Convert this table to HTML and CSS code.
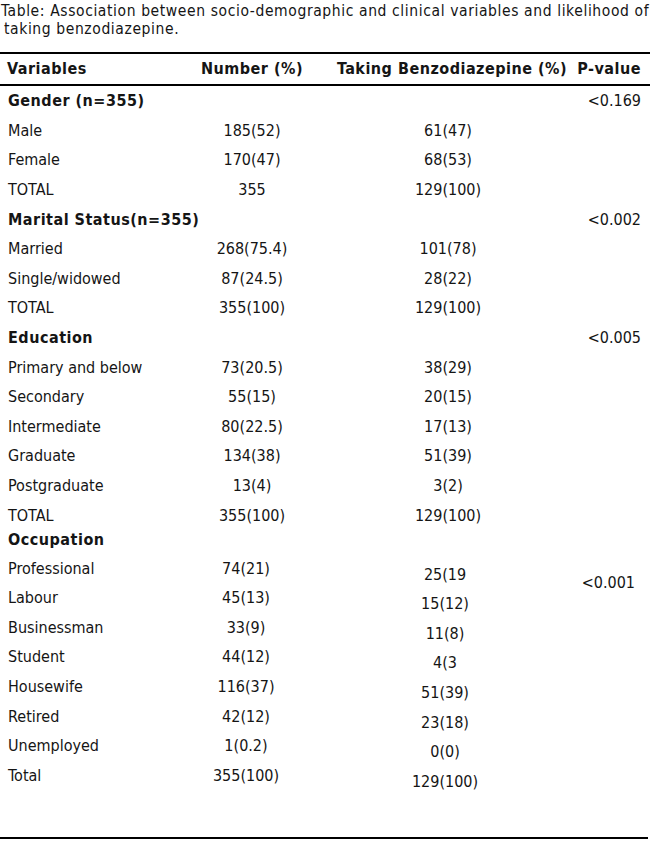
FILE: index.html
```html
<!DOCTYPE html>
<html lang="en">
<head>
<meta charset="utf-8">
<title>Association table</title>
<link rel="stylesheet" href="styles.css">
</head>
<body>
<div class="caption">
  <span class="line">Table: Association between socio-demographic and clinical variables and likelihood of</span>
  <span class="line indent">taking benzodiazepine.</span>
</div>
<table class="data">
  <colgroup>
    <col class="c-var"><col class="c-num"><col class="c-take"><col class="c-p">
  </colgroup>
  <thead>
    <tr>
      <th class="var">Variables</th>
      <th class="num">Number (%)</th>
      <th class="take">Taking Benzodiazepine (%)</th>
      <th class="p">P-value</th>
    </tr>
  </thead>
  <tbody>
    <tr class="group"><td class="var">Gender (n=355)</td><td></td><td></td><td class="p">&lt;0.169</td></tr>
    <tr><td class="var">Male</td><td class="num">185(52)</td><td class="take">61(47)</td><td></td></tr>
    <tr><td class="var">Female</td><td class="num">170(47)</td><td class="take">68(53)</td><td></td></tr>
    <tr><td class="var">TOTAL</td><td class="num">355</td><td class="take">129(100)</td><td></td></tr>

    <tr class="group"><td class="var">Marital Status(n=355)</td><td></td><td></td><td class="p">&lt;0.002</td></tr>
    <tr><td class="var">Married</td><td class="num">268(75.4)</td><td class="take">101(78)</td><td></td></tr>
    <tr><td class="var">Single/widowed</td><td class="num">87(24.5)</td><td class="take">28(22)</td><td></td></tr>
    <tr><td class="var">TOTAL</td><td class="num">355(100)</td><td class="take">129(100)</td><td></td></tr>

    <tr class="group"><td class="var">Education</td><td></td><td></td><td class="p">&lt;0.005</td></tr>
    <tr><td class="var">Primary and below</td><td class="num">73(20.5)</td><td class="take">38(29)</td><td></td></tr>
    <tr><td class="var">Secondary</td><td class="num">55(15)</td><td class="take">20(15)</td><td></td></tr>
    <tr><td class="var">Intermediate</td><td class="num">80(22.5)</td><td class="take">17(13)</td><td></td></tr>
    <tr><td class="var">Graduate</td><td class="num">134(38)</td><td class="take">51(39)</td><td></td></tr>
    <tr><td class="var">Postgraduate</td><td class="num">13(4)</td><td class="take">3(2)</td><td></td></tr>
    <tr><td class="var">TOTAL</td><td class="num">355(100)</td><td class="take">129(100)</td><td></td></tr>

    <tr class="group short"><td class="var">Occupation</td><td></td><td></td><td></td></tr>
    <tr class="occ"><td class="var">Professional</td><td class="num">74(21)</td><td class="take">25(19</td><td class="p pspan" rowspan="2">&lt;0.001</td></tr>
    <tr class="occ"><td class="var">Labour</td><td class="num">45(13)</td><td class="take">15(12)</td></tr>
    <tr class="occ"><td class="var">Businessman</td><td class="num">33(9)</td><td class="take">11(8)</td><td></td></tr>
    <tr class="occ"><td class="var">Student</td><td class="num">44(12)</td><td class="take">4(3</td><td></td></tr>
    <tr class="occ"><td class="var">Housewife</td><td class="num">116(37)</td><td class="take">51(39)</td><td></td></tr>
    <tr class="occ"><td class="var">Retired</td><td class="num">42(12)</td><td class="take">23(18)</td><td></td></tr>
    <tr class="occ"><td class="var">Unemployed</td><td class="num">1(0.2)</td><td class="take">0(0)</td><td></td></tr>
    <tr class="occ"><td class="var">Total</td><td class="num">355(100)</td><td class="take">129(100)</td><td></td></tr>
  </tbody>
</table>
<div class="endrule"></div>
</body>
</html>
```

FILE: styles.css
```css
html, body {
  margin: 0;
  padding: 0;
  background: #ffffff;
}

body {
  width: 650px;
  color: #151515;
  font-family: "DejaVu Sans Condensed", "Liberation Sans", sans-serif;
}

.caption {
  box-sizing: border-box;
  height: 52px;
  padding: 2px 0 0 1px;
  font-size: 15.5px;
  line-height: 18px;
  letter-spacing: 0.6px;
  white-space: nowrap;
}

.caption .line {
  display: block;
}

.caption .indent {
  padding-left: 3px;
}

.data {
  width: 650px;
  table-layout: fixed;
  border-collapse: separate;
  border-spacing: 0;
  font-size: 16px;
}

.c-var { width: 192px; }
.c-num { width: 120px; }
.c-take { width: 264px; }
.c-p { width: 74px; }

th, td {
  box-sizing: border-box;
  padding: 0;
  line-height: 17px;
  vertical-align: middle;
  white-space: nowrap;
}

thead th {
  height: 34px;
  border-top: 2px solid #000;
  border-bottom: 2px solid #000;
  padding-bottom: 2px;
  font-weight: bold;
  letter-spacing: 0.5px;
  text-align: center;
}

td {
  height: 29.6px;
}

.var {
  text-align: left;
  padding-left: 8px;
}

thead th.var {
  padding-left: 7px;
}

.num,
.take {
  text-align: center;
}

.take {
  padding-left: 8px;
}

thead th.take {
  padding-left: 16px;
}

.p {
  text-align: right;
  padding-right: 9px;
}

.group .var {
  font-weight: bold;
  letter-spacing: 0.5px;
}

.short td {
  height: 23.4px;
  padding-bottom: 4px;
}

.occ .num {
  padding-right: 12px;
}

.occ .take {
  padding-top: 12px;
  padding-right: 6px;
}

.p.pspan {
  padding-right: 15px;
  padding-top: 0;
}

.endrule {
  margin-top: 47px;
  width: 648px;
  border-top: 2px solid #000;
}
```
